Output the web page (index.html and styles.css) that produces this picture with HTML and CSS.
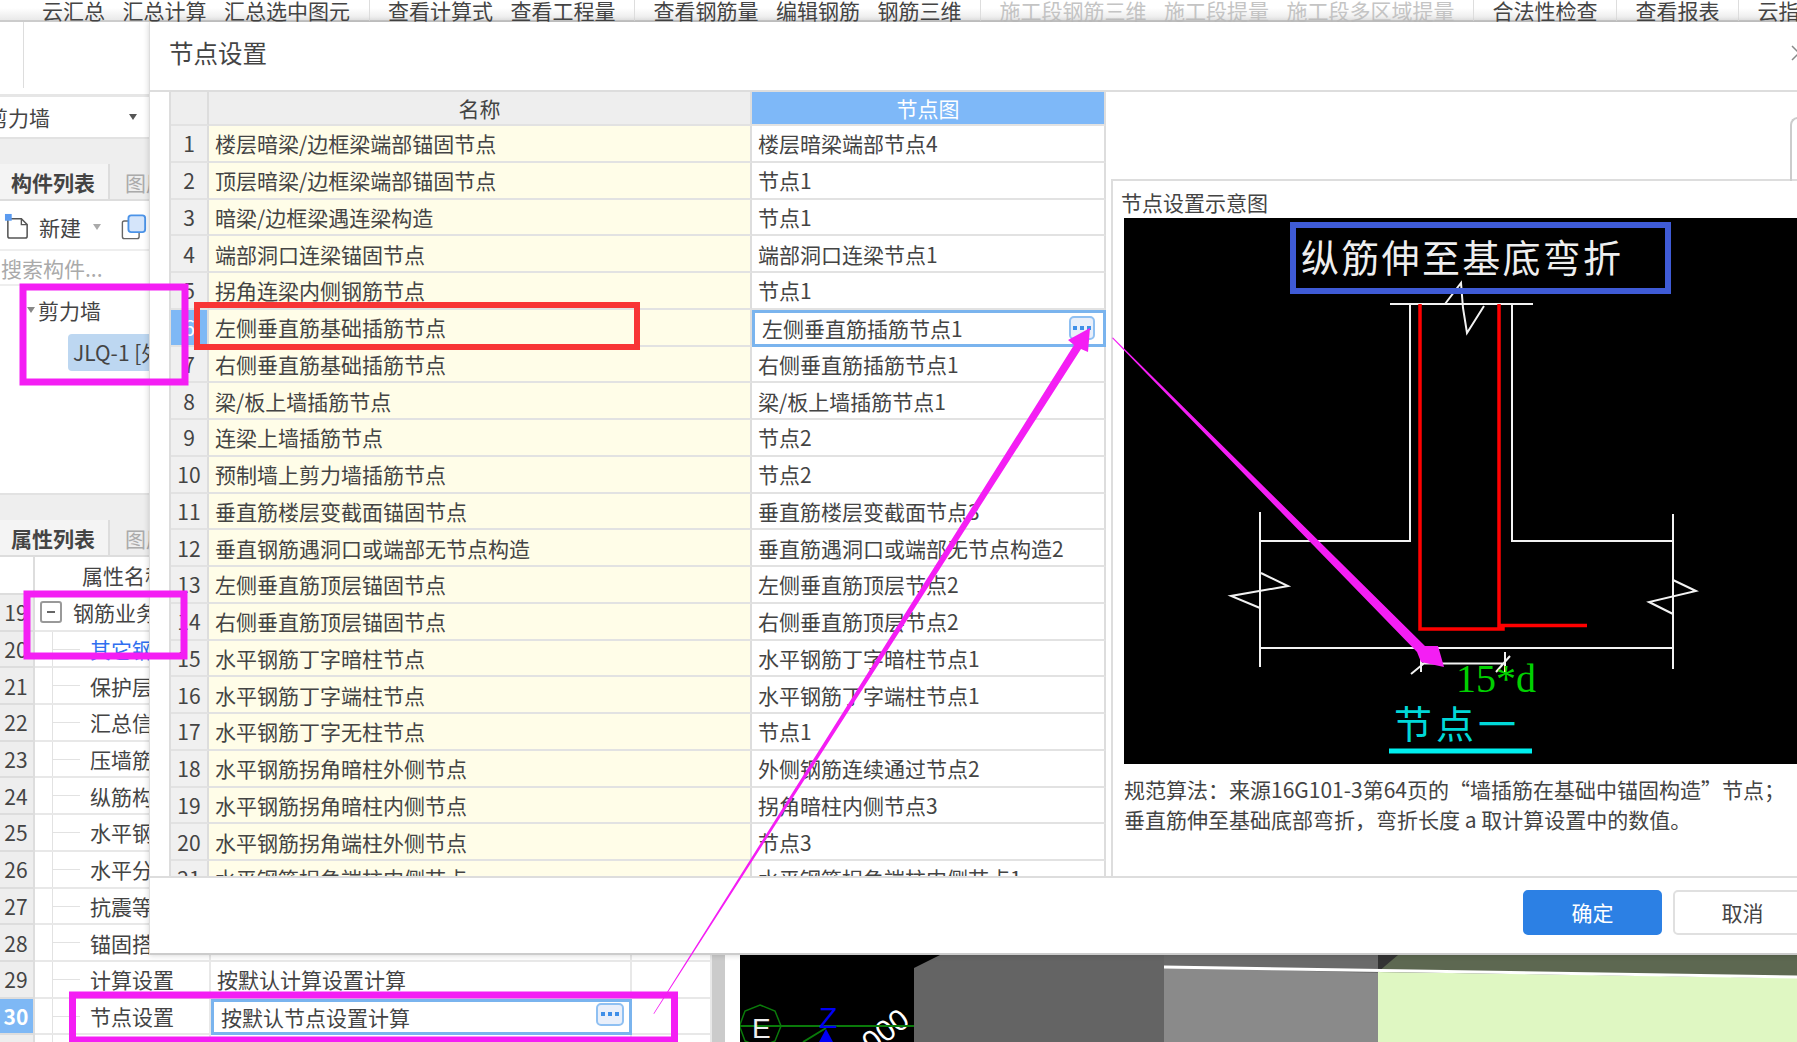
FILE: index.html
```html
<!DOCTYPE html>
<html lang="zh-CN">
<head>
<meta charset="utf-8">
<title>节点设置</title>
<link rel="stylesheet" href="styles.css">
</head>
<body>
<div class="app">
  <div class="menubar">
    <span>云汇总</span><span>汇总计算</span><span>汇总选中图元</span><i class="msep"></i>
    <span>查看计算式</span><span>查看工程量</span><i class="msep"></i>
    <span>查看钢筋量</span><span>编辑钢筋</span><span>钢筋三维</span><i class="msep"></i>
    <span class="off">施工段钢筋三维</span><span class="off">施工段提量</span><span class="off">施工段多区域提量</span><i class="msep"></i>
    <span>合法性检查</span><i class="msep"></i><span>查看报表</span><i class="msep"></i><span>云指标</span>
  </div>
  <div class="ribbon"><i class="ribbon-line"></i></div>
  <div class="workspace">
    <aside class="side">
      <div class="side-main">
        <div class="kind"><span class="kind-text">剪力墙</span><i class="caret"></i></div>
        <div class="band"></div>
        <div class="tabs"><b class="tab">构件列表</b><span class="tab-off">图层</span></div>
        <div class="tools">
          <svg class="ico-new" viewBox="0 0 28 28"><path d="M4 6h14l6 6v12a2 2 0 0 1-2 2H6a2 2 0 0 1-2-2z" fill="#fff" stroke="#555" stroke-width="1.6"/><path d="M18 6v6h6" fill="none" stroke="#555" stroke-width="1.4"/><rect x="1" y="1" width="7" height="7" fill="#5b9bf0"/></svg>
          <span class="tool-text">新建</span><i class="caret caret-light"></i>
          <svg class="ico-copy" viewBox="0 0 28 28"><rect x="1.5" y="7.5" width="18" height="19" rx="2" fill="#fff" stroke="#666" stroke-width="1.5"/><rect x="8" y="1.5" width="18" height="18" rx="3" fill="#d5e5fa" stroke="#4b93e8" stroke-width="2"/></svg>
        </div>
        <div class="search">搜索构件...</div>
        <div class="tree">
          <div class="tree-root"><i class="caret caret-tree"></i>剪力墙</div>
          <div class="tree-leaf">JLQ-1 [外墙]</div>
        </div>
        <div class="band band-low"></div>
        <div class="tabs tabs-low"><b class="tab">属性列表</b><span class="tab-off">图层</span></div>
        <div class="props">
          <div class="p-row p-head"><span class="p-n"></span><span class="p-k p-center">属性名称</span><span class="p-v"></span><span class="p-x"></span></div>
          <div class="p-row"><span class="p-n">19</span><span class="p-k p-group"><i class="minus"></i>钢筋业务属性</span><span class="p-v"></span><span class="p-x"></span></div>
          <div class="p-row"><span class="p-n">20</span><span class="p-k p-link">其它钢筋</span><span class="p-v"></span><span class="p-x"></span></div>
          <div class="p-row"><span class="p-n">21</span><span class="p-k">保护层厚度</span><span class="p-v"></span><span class="p-x"></span></div>
          <div class="p-row"><span class="p-n">22</span><span class="p-k">汇总信息</span><span class="p-v"></span><span class="p-x"></span></div>
          <div class="p-row"><span class="p-n">23</span><span class="p-k">压墙筋</span><span class="p-v"></span><span class="p-x"></span></div>
          <div class="p-row"><span class="p-n">24</span><span class="p-k">纵筋构造</span><span class="p-v"></span><span class="p-x"></span></div>
          <div class="p-row"><span class="p-n">25</span><span class="p-k">水平钢筋</span><span class="p-v"></span><span class="p-x"></span></div>
          <div class="p-row"><span class="p-n">26</span><span class="p-k">水平分布</span><span class="p-v"></span><span class="p-x"></span></div>
          <div class="p-row"><span class="p-n">27</span><span class="p-k">抗震等级</span><span class="p-v"></span><span class="p-x"></span></div>
          <div class="p-row"><span class="p-n">28</span><span class="p-k">锚固搭接</span><span class="p-v"></span><span class="p-x"></span></div>
          <div class="p-row"><span class="p-n">29</span><span class="p-k">计算设置</span><span class="p-v">按默认计算设置计算</span><span class="p-x"></span></div>
          <div class="p-row p-sel"><span class="p-n">30</span><span class="p-k">节点设置</span><span class="p-v p-input">按默认节点设置计算<i class="more more-low"><i></i><i></i><i></i></i></span><span class="p-x"></span></div>
          <div class="p-row"><span class="p-n"></span><span class="p-k"></span><span class="p-v"></span><span class="p-x"></span></div>
        </div>
      </div>
      <div class="splitter"></div>
    </aside>
    <main class="view">
      <svg class="scene" viewBox="740 97 1057 945">
        <rect x="740" y="97" width="1057" height="945" fill="#000"/>
        <text x="872" y="1054" class="s-n" transform="rotate(-38 872 1054)">000</text>
        <path d="M914 968 L940 955 H1164 V1042 H914Z" fill="#646464"/>
        <rect x="1164" y="955" width="214" height="87" fill="#8a8a8a"/>
        <path d="M1164 955 H1378 V973 L1164 967Z" fill="#6a6a6a"/>
        <path d="M1378 955 H1797 V978 L1378 972Z" fill="#5d6851"/>
        <path d="M1378 955 H1398 L1378 972Z" fill="#333"/>
        <path d="M1378 972 L1797 978 V1042 H1378Z" fill="#dff7c2"/>
        <path d="M1164 967 L1797 977" stroke="#fff" stroke-width="3"/>
        <path d="M760 1005 L775 1011 L781 1026 L775 1041 L760 1047 L745 1041 L739.5 1026 L745 1011Z" fill="none" stroke="#0a7a0a" stroke-width="1.5"/>
        <path d="M740 1026 H914 M803 1042 L826 1028" stroke="#0a7a0a" stroke-width="2" fill="none"/>
        <text x="752" y="1038" class="s-e">E</text>
        <text x="819" y="1028" class="s-z">Z</text>
        <path d="M826 1029 L833 1042 H819Z" fill="#0000f5"/>
      </svg>
    </main>
  </div>
</div>

<section class="dialog">
  <header class="d-head"><span>节点设置</span>
    <svg class="d-close" viewBox="0 0 16 16"><path d="M1 1L15 15M15 1L1 15" stroke="#888" stroke-width="1.5"/></svg>
  </header>
  <div class="d-body">
    <div class="grid">
      <div class="c c-h"></div><div class="c c-h">名称</div><div class="c c-h c-h-on">节点图</div>
      <div class="c c-n">1</div><div class="c c-a">楼层暗梁/边框梁端部锚固节点</div><div class="c c-b">楼层暗梁端部节点4</div>
      <div class="c c-n">2</div><div class="c c-a">顶层暗梁/边框梁端部锚固节点</div><div class="c c-b">节点1</div>
      <div class="c c-n">3</div><div class="c c-a">暗梁/边框梁遇连梁构造</div><div class="c c-b">节点1</div>
      <div class="c c-n">4</div><div class="c c-a">端部洞口连梁锚固节点</div><div class="c c-b">端部洞口连梁节点1</div>
      <div class="c c-n">5</div><div class="c c-a">拐角连梁内侧钢筋节点</div><div class="c c-b">节点1</div>
      <div class="c c-n c-n-on">6</div><div class="c c-a">左侧垂直筋基础插筋节点</div><div class="c c-b c-on">左侧垂直筋插筋节点1<i class="more"><i></i><i></i><i></i></i></div>
      <div class="c c-n">7</div><div class="c c-a">右侧垂直筋基础插筋节点</div><div class="c c-b">右侧垂直筋插筋节点1</div>
      <div class="c c-n">8</div><div class="c c-a">梁/板上墙插筋节点</div><div class="c c-b">梁/板上墙插筋节点1</div>
      <div class="c c-n">9</div><div class="c c-a">连梁上墙插筋节点</div><div class="c c-b">节点2</div>
      <div class="c c-n">10</div><div class="c c-a">预制墙上剪力墙插筋节点</div><div class="c c-b">节点2</div>
      <div class="c c-n">11</div><div class="c c-a">垂直筋楼层变截面锚固节点</div><div class="c c-b">垂直筋楼层变截面节点3</div>
      <div class="c c-n">12</div><div class="c c-a">垂直钢筋遇洞口或端部无节点构造</div><div class="c c-b">垂直筋遇洞口或端部无节点构造2</div>
      <div class="c c-n">13</div><div class="c c-a">左侧垂直筋顶层锚固节点</div><div class="c c-b">左侧垂直筋顶层节点2</div>
      <div class="c c-n">14</div><div class="c c-a">右侧垂直筋顶层锚固节点</div><div class="c c-b">右侧垂直筋顶层节点2</div>
      <div class="c c-n">15</div><div class="c c-a">水平钢筋丁字暗柱节点</div><div class="c c-b">水平钢筋丁字暗柱节点1</div>
      <div class="c c-n">16</div><div class="c c-a">水平钢筋丁字端柱节点</div><div class="c c-b">水平钢筋丁字端柱节点1</div>
      <div class="c c-n">17</div><div class="c c-a">水平钢筋丁字无柱节点</div><div class="c c-b">节点1</div>
      <div class="c c-n">18</div><div class="c c-a">水平钢筋拐角暗柱外侧节点</div><div class="c c-b">外侧钢筋连续通过节点2</div>
      <div class="c c-n">19</div><div class="c c-a">水平钢筋拐角暗柱内侧节点</div><div class="c c-b">拐角暗柱内侧节点3</div>
      <div class="c c-n">20</div><div class="c c-a">水平钢筋拐角端柱外侧节点</div><div class="c c-b">节点3</div>
      <div class="c c-n">21</div><div class="c c-a">水平钢筋拐角端柱内侧节点</div><div class="c c-b">水平钢筋拐角端柱内侧节点1</div>
    </div>
    <div class="preview">
      <div class="pv-title">节点设置示意图</div>
      <svg class="drawing" viewBox="1124 218 673 546">
        <rect x="1124" y="218" width="673" height="546" fill="#000"/>
        <g class="wh">
          <path d="M1390 304H1533M1410 304V541H1260M1512 304V541H1673M1260 512V667M1673 514V669M1260 648H1673"/>
          <path d="M1445 304L1461 283L1463 308L1467 333L1484 306"/>
          <path d="M1261 573L1288 586L1231 596L1260 608"/>
          <path d="M1673 580L1696 591L1649 602L1673 614"/>
          <path d="M1421 663.500H1505M1421 657V672M1505 652V672M1411 674L1428 660M1496 672L1510 656"/>
        </g>
        <path class="rd" d="M1420 304V629H1503V625.500M1499 304V625.500H1587"/>
        <text x="1301" y="272" class="t-title">纵筋伸至基底弯折</text>
        <text x="1456" y="692" class="t-len">15*d</text>
        <text x="1394" y="738" class="t-node">节点一</text>
        <rect x="1389" y="748.500" width="143" height="5" fill="#00f0f0"/>
      </svg>
      <p class="pv-text">规范算法：来源16G101-3第64页的“墙插筋在基础中锚固构造”节点；<br>垂直筋伸至基础底部弯折，弯折长度 a 取计算设置中的数值。</p>
    </div>
    <i class="edge"></i>
  </div>
  <footer class="d-foot"><button class="btn btn-ok">确定</button><button class="btn">取消</button></footer>
</section>

<svg class="marks" viewBox="0 0 1797 1042">
  <g class="m-box">
    <rect x="23" y="287" width="162" height="95"/>
    <rect x="27" y="594" width="157" height="62"/>
    <rect x="72.500" y="995" width="602" height="45"/>
  </g>
  <rect class="r-box" x="197" y="305" width="440" height="42"/>
  <rect class="b-box" x="1293" y="225" width="375" height="66"/>
  <path class="m-fill" d="M1112 338L1113 337.500L1425 646L1438 646L1444 667L1421 662L1417 652Z"/>
  <path class="m-fill" d="M654 1014L653.500 1013.500L1074 345L1068 340L1090 328L1088 352L1081 349Z"/>
</svg>
</body>
</html>
```

FILE: styles.css
```css
* { box-sizing: border-box; }
html, body { margin: 0; padding: 0; }
body {
  width: 1797px;
  height: 1042px;
  overflow: hidden;
  position: relative;
  background: #fff;
  color: #444;
  font-family: "Noto Sans CJK SC", "Noto Sans", sans-serif;
  font-size: 21px;
}
i { font-style: normal; }

.app { display: flex; flex-direction: column; height: 1042px; overflow: hidden; }
.menubar {
  height: 22px;
  flex: none;
  display: flex;
  align-items: center;
  gap: 17.5px;
  padding-left: 42px;
  background: linear-gradient(#fff 40%, #e9e9e9);
  border-bottom: 2px solid #ccc;
  white-space: nowrap;
  line-height: 20px;
}
.menubar .off { color: #c4c4c4; }
.msep { width: 1px; height: 22px; background: #ddd; margin: 0 1px; flex: none; }
.ribbon { height: 75px; flex: none; padding-left: 23px; background: #fff; border-bottom: 3px solid #e6e6e6; }
.ribbon-line { display: block; width: 1px; height: 66px; background: #ddd; }
.workspace { flex: 1; display: flex; min-height: 0; overflow: hidden; }

.side { width: 740px; flex: none; display: flex; }
.side-main { width: 712px; flex: none; }
.splitter { width: 13px; background: #cbcbcb; }
.kind {
  height: 40px;
  display: flex;
  align-items: center;
  justify-content: space-between;
  padding: 0 575px 0 0;
  background: #fff;
}
.kind-text { margin-left: -13px; }
.caret { width: 0; height: 0; border: 4px solid transparent; border-top: 6px solid #555; border-bottom: 0; display: block; }
.band { height: 27px; background: #eee; border-top: 2px solid #e2e2e2; }
.band-low { height: 27px; }
.tabs { height: 37px; display: flex; align-items: center; background: #eee; border-bottom: 2px solid #ddd; }
.tabs-low { height: 37px; }
.tab {
  width: 110px;
  height: 100%;
  padding-left: 11px;
  display: flex;
  align-items: center;
  background: #f4f4f4;
  border-right: 2px solid #ddd;
  font-weight: 700;
  color: #444;
}
.tab-off { margin-left: 15px; color: #aaa; }
.tools { height: 50px; display: flex; align-items: center; padding: 3px 0 0 4px; border-bottom: 2px solid #eee; }
.ico-new { width: 27px; height: 27px; flex: none; }
.tool-text { margin-left: 8px; }
.caret-light { margin-left: 12px; border-top-color: #aaa; }
.ico-copy { width: 26px; height: 28px; margin-left: 20px; flex: none; }
.search { height: 35px; display: flex; align-items: center; padding-left: 1px; color: #aaa; border-bottom: 2px solid #eee; }
.tree { height: 207px; padding: 6px 0 0 27px; }
.tree-root { display: flex; align-items: center; height: 36px; }
.caret-tree { margin-right: 3px; border-top-color: #888; }
.tree-leaf {
  margin: 6px 0 0 41px;
  width: 170px;
  height: 37px;
  padding-left: 5px;
  border-radius: 4px;
  background: #bdd7f1;
  line-height: 36px;
  white-space: nowrap;
}
.props { background: #fff; }
.p-row { display: grid; grid-template-columns: 35px 176px 421px 80px; height: 36.7px; }
.p-head { height: 38px; }
.p-row > span { border-bottom: 2px solid #e8e8e8; border-right: 2px solid #e8e8e8; display: flex; align-items: center; white-space: nowrap; overflow: hidden; }
.p-n { background: #eee; justify-content: center; padding-right: 1px; border-color: #ddd !important; }
.p-head .p-n { background: #fff; }
.p-k { padding-left: 55px; position: relative; }
.p-k::before { content: ""; position: absolute; left: 17px; top: 17px; width: 28px; height: 1px; background: #e2e2e2; }
.p-k::after { content: ""; position: absolute; left: 17px; top: 0; bottom: 0; width: 1px; background: #e2e2e2; }
.p-center { padding-left: 47px; }
.p-center::before, .p-group::before, .p-center::after, .p-group::after { display: none; }
.p-group { padding-left: 5px; gap: 11px; }
.p-link { color: #2f6ff0; }
.p-v { padding-left: 6px; }
.minus { position: relative; flex: none; width: 22px; height: 22px; border: 2px solid #999; border-radius: 3px; }
.minus::after { content: ""; position: absolute; left: 5px; top: 8px; width: 8px; height: 2px; background: #666; }
.p-sel .p-n { background: #7eb8f5; color: #fff; font-weight: 700; }
.p-input { position: relative; border: 3px solid #7ab4ee !important; padding-left: 7px; overflow: visible !important; }
.more {
  position: absolute;
  right: 4px;
  top: 2px;
  width: 28px;
  height: 23px;
  display: flex;
  align-items: center;
  justify-content: center;
  gap: 3px;
  background: #e9effa;
  border: 2px solid #8fc0f2;
  border-radius: 5px;
}
.more i { width: 4px; height: 4px; background: #3f8fe8; }
.more-low { right: 5px; top: 1px; }
.view { flex: 1; min-width: 0; }
.scene { display: block; width: 1057px; height: 945px; }
.s-e { font: 28px "Liberation Sans", sans-serif; fill: #eee; }
.s-z { font: 30px "Liberation Sans", sans-serif; fill: #0000f5; }
.s-n { font: 30px "Liberation Sans", sans-serif; fill: #fff; }

.dialog {
  position: absolute;
  left: 149px;
  top: 22px;
  width: 1663px;
  height: 933px;
  display: flex;
  flex-direction: column;
  background: #fff;
  border-left: 1px solid #ddd;
  border-bottom: 2px solid #ccc;
  box-shadow: 0 0 6px rgba(0, 0, 0, .18);
}
.d-head { height: 68px; flex: none; display: flex; align-items: center; justify-content: space-between; padding: 0 5px 7px 19px; font-size: 24.5px; }
.d-close { width: 16px; height: 16px; }
.d-body { position: relative; height: 788px; flex: none; display: flex; border-top: 2px solid #ddd; border-bottom: 2px solid #ddd; padding-left: 19px; overflow: hidden; }
.grid {
  width: 937px;
  height: 784px;
  flex: none;
  display: grid;
  grid-template-columns: 38px 543px 354px;
  grid-auto-rows: 36.75px;
  grid-template-rows: 34px;
  align-content: start;
  overflow: hidden;
  border-left: 2px solid #ddd;
}
.c { display: flex; align-items: center; white-space: nowrap; border-right: 2px solid #ddd; border-bottom: 2px solid #e2e2e2; overflow: hidden; position: relative; }
.c-h { justify-content: center; background: #eee; }
.c-h-on { background: #7eb8f8; color: #fff; }
.c-n { justify-content: center; background: #f0f0f0; }
.c-n-on { background: #7eb8f5; color: #fff; }
.c-a { padding-left: 6px; background: #fffde8; }
.c-b { padding-left: 6px; }
.c-on { border: 3px solid #7ab4ee; padding-left: 7px; overflow: visible; }
.c-on .more { right: 8px; top: 3px; width: 26px; height: 24px; }
.preview { width: 708px; flex: none; margin: 87px 0 0 5px; border-left: 2px solid #ddd; border-top: 2px solid #ddd; padding-left: 11px; }
.pv-title { height: 37px; display: flex; align-items: flex-end; padding-bottom: 1px; line-height: 30px; margin-left: -3px; }
.drawing { display: block; width: 673px; height: 546px; }
.wh { fill: none; stroke: #f2f2f2; stroke-width: 2; }
.rd { fill: none; stroke: #f00; stroke-width: 3.500; }
.t-title { font: 38px "Noto Sans CJK SC", sans-serif; letter-spacing: 2.3px; fill: #eee; }
.t-len { font: 40px "Liberation Serif", serif; fill: #00d000; }
.t-node { font: 38px "Noto Sans CJK SC", sans-serif; letter-spacing: 4px; fill: #00d8d8; }
.pv-text { margin: 10px 0 0; font-size: 21px; line-height: 30px; white-space: nowrap; }
.edge { position: absolute; left: 1640px; top: 25px; width: 40px; height: 64px; border-left: 2px solid #ccc; border-top: 2px solid #ccc; border-top-left-radius: 8px; }
.d-foot { flex: 1; display: flex; justify-content: flex-end; align-items: center; gap: 11px; padding-bottom: 7px; }
.btn {
  width: 139px;
  height: 45px;
  font: 21px "Noto Sans CJK SC", sans-serif;
  color: #444;
  background: #fff;
  border: 2px solid #e0e0e0;
  border-radius: 5px;
}
.btn-ok { color: #fff; background: #2c80e4; border-color: #2c80e4; }

.marks { position: absolute; left: 0; top: 0; width: 1797px; height: 1042px; pointer-events: none; }
.m-box rect { fill: none; stroke: #f41ef4; stroke-width: 7; }
.r-box { fill: none; stroke: #f83535; stroke-width: 6; }
.b-box { fill: none; stroke: #3f5bd6; stroke-width: 6; }
.m-fill { fill: #f41ef4; }
```
